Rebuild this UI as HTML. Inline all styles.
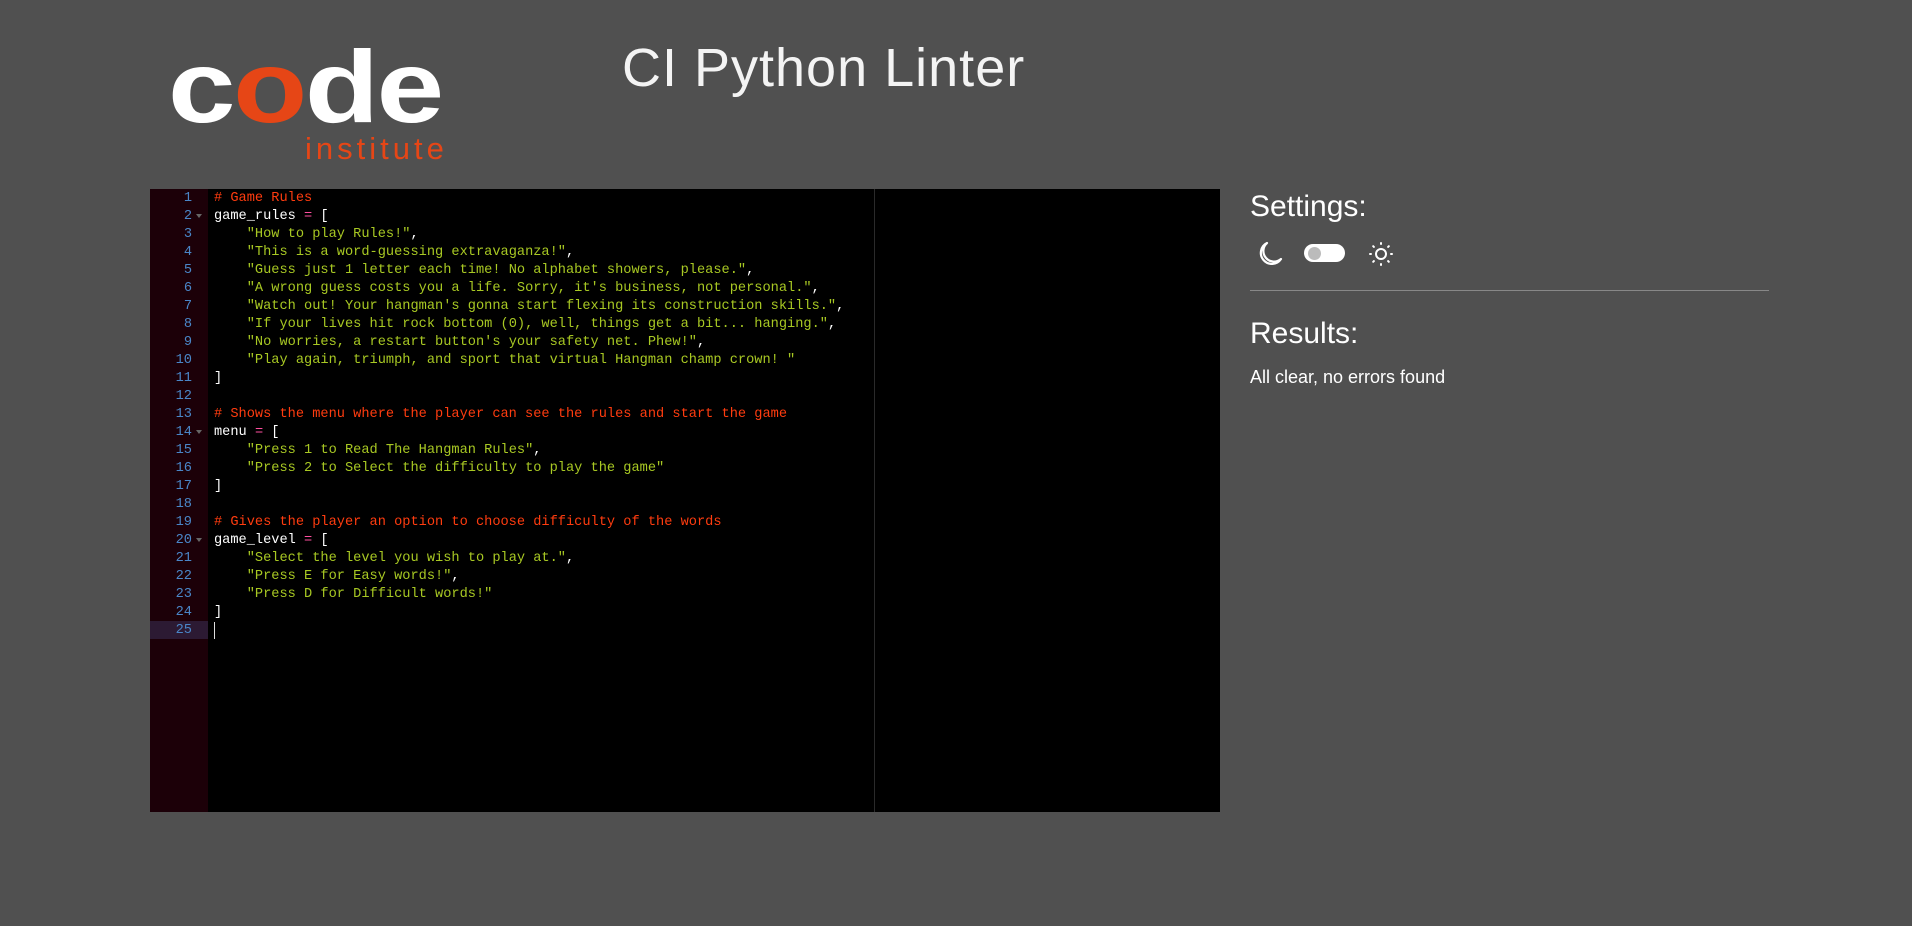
<!DOCTYPE html>
<html><head><meta charset="utf-8"><style>
html,body{margin:0;padding:0;background:#505050;width:1912px;height:926px;overflow:hidden;font-family:"Liberation Sans",sans-serif;}
.logo{position:absolute;left:168px;top:36px;color:#fff;font-weight:bold;font-size:102px;letter-spacing:-2px;line-height:1;transform:scaleX(1.19);transform-origin:0 0;}
.logo .o{color:#e64616}
.inst{position:absolute;left:305px;top:133px;color:#e64616;font-size:31px;letter-spacing:4px;line-height:1;}
.title{position:absolute;left:622px;top:39px;color:#f4f4f4;font-size:54px;line-height:1.1;font-weight:normal;letter-spacing:1px}
.ed{position:absolute;left:150px;top:189px;width:1070px;height:623px;background:#000;}
.gut{position:absolute;left:0;top:0;width:58px;height:623px;background:#1c0008;}
.act{position:absolute;left:0;top:432px;width:58px;height:18px;background:#2c1a33;}
.margin{position:absolute;left:724px;top:0;width:1px;height:623px;background:#2a2a2a;}
.nums,.code{position:absolute;top:1px;font-family:"Liberation Mono",monospace;font-size:13.65px;line-height:18px;white-space:pre;}
.nums{left:0;width:42px;text-align:right;color:#4a86c8;}
.code{left:64px;color:#fff;}
.c{color:#ff3c0f}.s{color:#a8c823}.p{color:#ff4fa0}
.fold{position:absolute;left:46px;width:0;height:0;border-left:3px solid transparent;border-right:3px solid transparent;border-top:4px solid #666;}
.cur{position:absolute;left:64px;top:433px;width:1px;height:17px;background:#ddd;}
.h{position:absolute;left:1250px;color:#fff;font-size:30px;line-height:1;}
.hr{position:absolute;left:1250px;top:290px;width:519px;height:1px;background:#888;}
.msg{position:absolute;left:1250px;top:367px;color:#fff;font-size:18px;}
</style></head><body>
<div class="logo">c<span class="o">o</span>de</div>
<div class="inst">institute</div>
<div class="title">CI Python Linter</div>
<div class="ed">
<div class="gut"></div><div class="act"></div><div class="margin"></div>
<div class="fold" style="top:25px"></div><div class="fold" style="top:241px"></div><div class="fold" style="top:349px"></div>
<div class="nums">1
2
3
4
5
6
7
8
9
10
11
12
13
14
15
16
17
18
19
20
21
22
23
24
25</div>
<div class="code"><span class="c"># Game Rules</span>
game_rules <span class="p">=</span> [
    <span class="s">"How to play Rules!"</span>,
    <span class="s">"This is a word-guessing extravaganza!"</span>,
    <span class="s">"Guess just 1 letter each time! No alphabet showers, please."</span>,
    <span class="s">"A wrong guess costs you a life. Sorry, it's business, not personal."</span>,
    <span class="s">"Watch out! Your hangman's gonna start flexing its construction skills."</span>,
    <span class="s">"If your lives hit rock bottom (0), well, things get a bit... hanging."</span>,
    <span class="s">"No worries, a restart button's your safety net. Phew!"</span>,
    <span class="s">"Play again, triumph, and sport that virtual Hangman champ crown! "</span>
]

<span class="c"># Shows the menu where the player can see the rules and start the game</span>
menu <span class="p">=</span> [
    <span class="s">"Press 1 to Read The Hangman Rules"</span>,
    <span class="s">"Press 2 to Select the difficulty to play the game"</span>
]

<span class="c"># Gives the player an option to choose difficulty of the words</span>
game_level <span class="p">=</span> [
    <span class="s">"Select the level you wish to play at."</span>,
    <span class="s">"Press E for Easy words!"</span>,
    <span class="s">"Press D for Difficult words!"</span>
]
</div>
<div class="cur"></div>
</div>
<div class="h" style="top:192px">Settings:</div>
<svg style="position:absolute;left:1256px;top:240px" width="28" height="28" viewBox="0 0 28 28"><path d="M11 3 A11 11 0 1 0 25 19 A9 9 0 0 1 11 3 Z" fill="none" stroke="#fff" stroke-width="2.2" stroke-linejoin="round"/></svg>
<div style="position:absolute;left:1304px;top:244px;width:41px;height:18px;border-radius:9px;background:#fff"></div>
<div style="position:absolute;left:1308px;top:247px;width:13px;height:13px;border-radius:50%;background:#bbb"></div>
<svg style="position:absolute;left:1367px;top:240px" width="28" height="28" viewBox="0 0 28 28" stroke="#fff" stroke-width="2" stroke-linecap="round" fill="none"><circle cx="14" cy="14" r="5"/><path d="M14 3v1M14 24v1M3 14h1M24 14h1M6.2 6.2l.7.7M21.1 21.1l.7.7M6.2 21.8l.7-.7M21.1 6.9l.7-.7"/></svg>
<div class="hr"></div>
<div class="h" style="top:319px">Results:</div>
<div class="msg">All clear, no errors found</div>
</body></html>
